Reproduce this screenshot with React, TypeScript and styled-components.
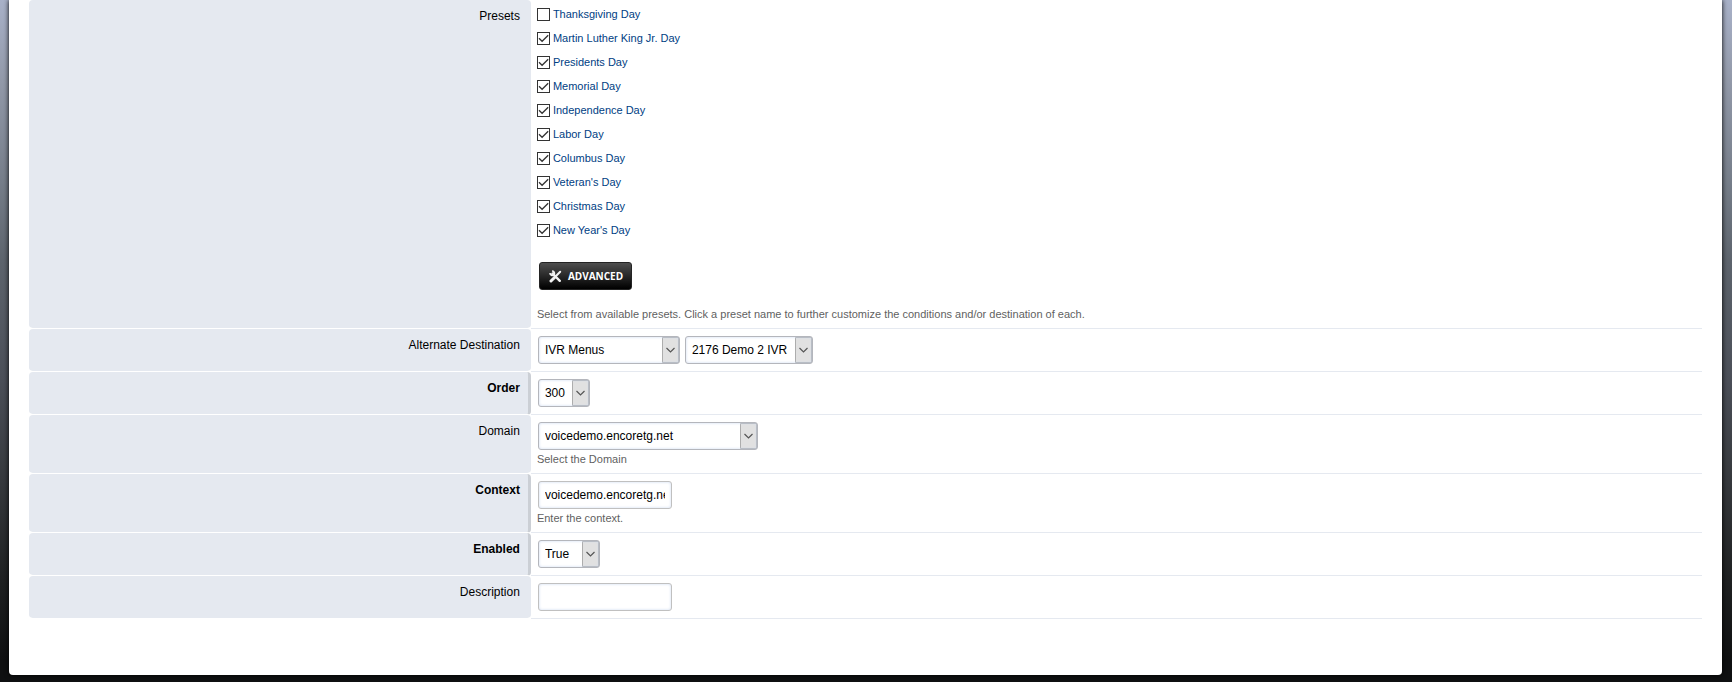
import React, { useState } from "react";
import styled, { createGlobalStyle } from "styled-components";

const Global = createGlobalStyle`
  *, *::before, *::after { box-sizing: border-box; }
  html { background: #0f1011; }
  body {
    margin: 0;
    font-family: "Liberation Sans", Arial, sans-serif;
    font-size: 12px;
    color: #000;
  }
`;

const Backdrop = styled.div`
  min-height: 100vh;
  padding: 0 10px 7px 9px;
  background: linear-gradient(
    to bottom,
    #a8b1c8 0,
    #9299a9 80px,
    #767e8a 180px,
    #5d646d 260px,
    #4b4f58 380px,
    #36393d 480px,
    #1f2122 580px,
    #0f1011 660px
  );
`;

const Card = styled.main`
  padding: 0 20px 56px;
  background: #fff;
  border-radius: 0 0 4px 4px;
  box-shadow: 0 0 5px #000;
`;

const Row = styled.div`
  display: grid;
  grid-template-columns: 30% 1fr;
`;

const Name = styled.label<{ $required?: boolean }>`
  padding: 8px ${(p) => (p.$required ? 8 : 11)}px 8px 8px;
  border-right: ${(p) => (p.$required ? "3px solid #cbcfd5" : "0")};
  border-bottom: 1px solid #fff;
  border-radius: 4px;
  background: #e5e9f0;
  background-clip: padding-box;
  font-weight: ${(p) => (p.$required ? 700 : 400)};
  line-height: 16px;
  text-align: right;
`;

const Value = styled.div<{ $tight?: boolean }>`
  min-height: 43px;
  padding: ${(p) => (p.$tight ? 2 : 7)}px 6px 5px;
  border-bottom: 1px solid #e5e9f0;
`;

const PresetList = styled.ul`
  margin: 0;
  padding: 0;
  list-style: none;
`;

const Preset = styled.li`
  display: flex;
  align-items: center;
  gap: 3px;
  height: 24px;
`;

const Tick = styled.input`
  appearance: none;
  width: 13px;
  height: 13px;
  margin: 0;
  border: 1px solid #333;
  background: #fff;

  &:checked {
    background: url("data:image/svg+xml,%3Csvg xmlns='http://www.w3.org/2000/svg' viewBox='0 0 11 11'%3E%3Cpath d='M1 5.2 4.1 8.3 10.2 2.2' fill='none' stroke='%23333' stroke-width='1.3'/%3E%3C/svg%3E");
  }
`;

const PresetLink = styled.a`
  color: #004083;
  font-size: 11px;
  text-decoration: none;
`;

const Advanced = styled.button`
  display: flex;
  align-items: center;
  gap: 6px;
  height: 28px;
  margin: 20px 0 15px 2px;
  padding: 0 8px 0 9px;
  border: 1px solid #242424;
  border-radius: 3px;
  background: linear-gradient(to bottom, #4f4f4f 0%, #000 100%);
  color: #fff;
  font: 700 10px "Open Sans", sans-serif;
  text-transform: uppercase;
`;

const Hint = styled.div`
  color: #5f5f5f;
  font-size: 11px;
  line-height: 18px;
`;

const Controls = styled.div`
  display: flex;
  gap: 5px;
  padding-left: 1px;
`;

const Field = styled.input`
  width: 134px;
  height: 28px;
  padding: 0 6px;
  border: 1px solid #c0c0c0;
  border-radius: 3px;
  background: #fff;
  box-shadow: inset 0 0 3px #cddaf0;
  color: #000;
  font: 12px "Liberation Sans", Arial, sans-serif;
`;

const Picker = styled.select<{ $width: number }>`
  appearance: none;
  width: ${(p) => p.$width}px;
  height: 28px;
  padding: 0 18px 0 6px;
  border: 1px solid #b4b6bc;
  border-radius: 3px;
  background:
    url("data:image/svg+xml,%3Csvg xmlns='http://www.w3.org/2000/svg' width='17' height='26' viewBox='0 0 17 26'%3E%3Cpath d='M0 0H17V26H0Z' fill='%23e1e1e1'/%3E%3Cpath d='M.5 .5H16.5V25.5H.5Z' fill='none' stroke='%23adadad'/%3E%3Cpath d='M4.5 11 8.5 15 12.5 11' fill='none' stroke='%23555' stroke-width='1.2'/%3E%3C/svg%3E") right center / 17px 26px no-repeat,
    #fff;
  box-shadow: inset 0 0 3px #cddaf0;
  color: #000;
  font: 12px "Liberation Sans", Arial, sans-serif;
`;

const presets = [
  "Thanksgiving Day",
  "Martin Luther King Jr. Day",
  "Presidents Day",
  "Memorial Day",
  "Independence Day",
  "Labor Day",
  "Columbus Day",
  "Veteran's Day",
  "Christmas Day",
  "New Year's Day",
];

const Tools = () => (
  <svg width="13" height="13" viewBox="0 0 13 13" fill="none" stroke="#f2f2f2" aria-hidden="true">
    <path d="M3.5 3.5 10.8 10.8" strokeWidth="2.4" strokeLinecap="round" />
    <path d="M1 3.2A2.4 2.4 0 0 0 4.8 4.8 2.4 2.4 0 0 0 3.2 1" strokeWidth="2" />
    <path d="M2 11 5.8 7.2" strokeWidth="3" strokeLinecap="round" />
    <path d="M6.5 6.5 11.2 1.8" strokeWidth="2" strokeLinecap="round" />
  </svg>
);

export default function App() {
  const [checked, setChecked] = useState(presets.map((_, i) => i > 0));
  const toggle = (index: number) =>
    setChecked((list) => list.map((on, i) => (i === index ? !on : on)));

  return (
    <>
      <Global />
      <Backdrop>
        <Card>
          <Row>
            <Name as="div">Presets</Name>
            <Value $tight>
              <PresetList>
                {presets.map((name, i) => (
                  <Preset key={name}>
                    <Tick
                      type="checkbox"
                      aria-label={name}
                      checked={checked[i]}
                      onChange={() => toggle(i)}
                    />
                    <PresetLink href="#">{name}</PresetLink>
                  </Preset>
                ))}
              </PresetList>
              <Advanced type="button">
                <Tools />
                Advanced
              </Advanced>
              <Hint>
                Select from available presets. Click a preset name to further customize the
                conditions and/or destination of each.
              </Hint>
            </Value>
          </Row>
          <Row>
            <Name htmlFor="destination">Alternate Destination</Name>
            <Value>
              <Controls>
                <Picker id="destination" $width={142}>
                  <option>IVR Menus</option>
                </Picker>
                <Picker aria-label="IVR menu" $width={128}>
                  <option>2176 Demo 2 IVR</option>
                </Picker>
              </Controls>
            </Value>
          </Row>
          <Row>
            <Name htmlFor="order" $required>Order</Name>
            <Value>
              <Controls>
                <Picker id="order" $width={52}>
                  <option>300</option>
                </Picker>
              </Controls>
            </Value>
          </Row>
          <Row>
            <Name htmlFor="domain">Domain</Name>
            <Value>
              <Controls>
                <Picker id="domain" $width={220}>
                  <option>voicedemo.encoretg.net</option>
                </Picker>
              </Controls>
              <Hint>Select the Domain</Hint>
            </Value>
          </Row>
          <Row>
            <Name htmlFor="context" $required>Context</Name>
            <Value>
              <Controls>
                <Field id="context" defaultValue="voicedemo.encoretg.net" />
              </Controls>
              <Hint>Enter the context.</Hint>
            </Value>
          </Row>
          <Row>
            <Name htmlFor="enabled" $required>Enabled</Name>
            <Value>
              <Controls>
                <Picker id="enabled" $width={62}>
                  <option>True</option>
                </Picker>
              </Controls>
            </Value>
          </Row>
          <Row>
            <Name htmlFor="description">Description</Name>
            <Value>
              <Controls>
                <Field id="description" />
              </Controls>
            </Value>
          </Row>
        </Card>
      </Backdrop>
    </>
  );
}
